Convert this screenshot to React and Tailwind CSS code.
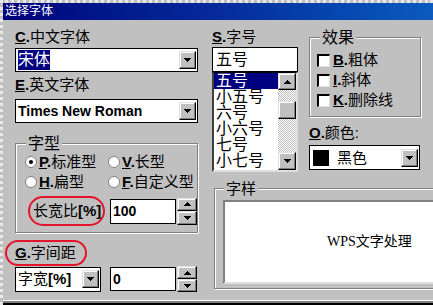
import React from 'react';

const raised =
  'flex shrink-0 items-center justify-center bg-[#c0c0c0] border border-t-[#dfdfdf] border-l-[#dfdfdf] border-r-black border-b-black shadow-[inset_-1px_-1px_0_#808080,inset_1px_1px_0_#fff]';

function Tri({ up }) {
  const rows = up ? [3, 2, 1, 0] : [0, 1, 2, 3];
  return (
    <svg width="7" height="4" viewBox="0 0 7 4" shapeRendering="crispEdges">
      {rows.map((r, i) => (
        <rect key={i} x={r} y={i} width={7 - r * 2} height="1" fill="#000" />
      ))}
    </svg>
  );
}

function DropBtn({ className = '' }) {
  return (
    <div className={`${raised} h-[18px] w-[17px] ${className}`}>
      <Tri />
    </div>
  );
}

function Spinner({ className = '' }) {
  return (
    <div className={`flex w-[20px] flex-col ${className}`}>
      <div className={`${raised} flex-1`}>
        <Tri up />
      </div>
      <div className={`${raised} flex-1`}>
        <Tri />
      </div>
    </div>
  );
}

function Label({ k, text, className = '' }) {
  return (
    <div className={`text-[15px] leading-[18px] ${className}`}>
      <span className="font-bold underline">{k}</span>
      <span className="font-bold">.</span>
      {text}
    </div>
  );
}

function Radio({ on, k, text }) {
  return (
    <div className="flex h-[18px] items-center gap-[2px]">
      <svg width="12" height="12" viewBox="0 0 12 12">
        <circle cx="6" cy="6" r="5.5" fill="#fff" stroke="#808080" />
        {on && <circle cx="6" cy="6" r="2" fill="#000" />}
      </svg>
      <span className="text-[15px] leading-[18px]">
        <span className="font-bold underline">{k}</span>
        <span className="font-bold">.</span>
        {text}
      </span>
    </div>
  );
}

function Check({ k, text }) {
  return (
    <div className="flex h-[18px] items-center gap-[3px]">
      <div className="h-[13px] w-[13px] border-t-2 border-l-2 border-r border-b border-t-black border-l-black border-r-[#dfdfdf] border-b-[#dfdfdf] bg-white" />
      <span className="text-[15px] leading-[18px]">
        <span className="font-bold underline">{k}</span>
        <span className="font-bold">.</span>
        {text}
      </span>
    </div>
  );
}

const group = 'border border-[#808080] shadow-[inset_1px_1px_0_#fff,1px_1px_0_#fff]';
const legend = '-mt-[9px] w-fit bg-[#c0c0c0] px-[2px] leading-[17px]';
const redRing = 'flex items-center rounded-[15px] border-2 border-[#e4142a]';

export default function App() {
  const sizes = ['五号', '小五号', '六号', '小六号', '七号', '小七号'];

  return (
    <div className="flex h-[305px] w-[433px] flex-col overflow-hidden border-l-[3px] border-t-[3px] border-dotted border-[#e8e8e8] bg-[#c0c0c0] font-['Liberation_Sans','Noto_Sans_CJK_SC',sans-serif] text-black">
      <div className="h-[17px] shrink-0 bg-gradient-to-r from-[#00007b] via-[#062a9c] to-[#0c5bbf] pl-[2px] text-[12px] leading-[17px] text-white">
        选择字体
      </div>

      <div className="flex flex-1">
        {/* left column */}
        <div className="ml-[12px] flex w-[189px] flex-col">
          <Label className="mt-[8px]" k="C" text="中文字体" />
          <div className="mt-[2px] flex h-[24px] items-center border border-black bg-white pl-[2px] pr-[1px]">
            <span className="bg-[#000080] text-[16px] leading-[20px] text-white">宋体</span>
            <DropBtn className="ml-auto" />
          </div>

          <Label className="mt-[4px]" k="E" text="英文字体" />
          <div className="mt-[5px] flex h-[24px] items-center border border-black bg-white pl-[2px] pr-[1px]">
            <span className="text-[14px] font-bold leading-[18px]">Times New Roman</span>
            <DropBtn className="ml-auto" />
          </div>

          <div className={`mt-[20px] pb-[6px] ${group}`}>
            <div className={`ml-[10px] text-[16px] ${legend}`}>字型</div>
            <div className="mt-[1px] grid grid-cols-[83px_1fr] gap-y-[2px] pl-[9px]">
              <Radio on k="P" text="标准型" />
              <Radio k="V" text="长型" />
              <Radio k="H" text="扁型" />
              <Radio k="F" text="自定义型" />
            </div>
            <div className="ml-[12px] mt-[5px] flex h-[30px] items-center">
              <div className={`${redRing} h-[30px] w-[77px] pl-[3px] text-[15px] leading-[18px]`}>
                长宽比<span className="font-bold">[%]</span>
              </div>
              <div className="ml-[5px] flex h-[25px] w-[66px] items-center border border-black bg-white pl-[2px] text-[14px] font-bold">
                100
              </div>
              <Spinner className="ml-[1px] h-[27px]" />
            </div>
          </div>

          <div className={`${redRing} -ml-[10px] mt-[7px] h-[26px] w-[82px] pl-[8px]`}>
            <Label k="G" text="字间距" />
          </div>

          <div className="flex items-center">
            <div className="flex h-[25px] w-[86px] items-center border border-black bg-white pl-[2px] pr-[1px] text-[15px] leading-[18px]">
              字宽<span className="font-bold">[%]</span>
              <DropBtn className="ml-auto" />
            </div>
            <div className="ml-[9px] flex h-[24px] w-[66px] items-center border border-black bg-white pl-[2px] text-[14px] font-bold">
              0
            </div>
            <Spinner className="ml-[1px] h-[26px]" />
          </div>
        </div>

        {/* right area */}
        <div className="ml-[14px] flex flex-col">
          <div className="flex">
            <div className="flex w-[86px] flex-col">
              <Label className="mt-[8px]" k="S" text="字号" />
              <div className="mt-[1px] flex h-[25px] items-center border border-black bg-white pl-[3px] text-[16px]">
                五号
              </div>
              <div className="flex h-[100px] border-t border-l-2 border-r-2 border-b-2 border-t-black border-l-[#404040] border-r-[#dfdfdf] border-b-[#dfdfdf] bg-white">
                <div className="flex w-[64px] flex-col">
                  {sizes.map((s, i) => (
                    <div
                      key={s}
                      className={`h-[16px] pl-[2px] text-[16px] leading-[16px] ${
                        i === 0 ? 'bg-[#000080] text-white' : ''
                      }`}
                    >
                      {s}
                    </div>
                  ))}
                </div>
                <div className="flex w-[18px] flex-col bg-[repeating-conic-gradient(#c0c0c0_0_25%,#fff_0_50%)] bg-[length:2px_2px]">
                  <div className={`${raised} h-[17px]`}>
                    <Tri up />
                  </div>
                  <div className={`${raised} mt-[11px] h-[18px]`} />
                  <div className="flex-1" />
                  <div className={`${raised} h-[18px]`}>
                    <Tri />
                  </div>
                </div>
              </div>
            </div>

            <div className="ml-[11px] flex w-[112px] flex-col">
              <div className={`mt-[17px] h-[80px] ${group}`}>
                <div className={`ml-[10px] text-[16px] ${legend}`}>效果</div>
                <div className="mt-[5px] flex flex-col gap-[2px] pl-[7px]">
                  <Check k="B" text="粗体" />
                  <Check k="I" text="斜体" />
                  <Check k="K" text="删除线" />
                </div>
              </div>
              <div className="mt-[7px] text-[15px] leading-[18px]">
                <span className="font-bold underline">O</span>
                <span className="font-bold">.</span>颜色:
              </div>
              <div className="mt-[3px] flex h-[25px] w-[111px] items-center border border-black bg-white pl-[3px] pr-[1px]">
                <div className="h-[16px] w-[16px] bg-black" />
                <span className="ml-[8px] text-[15px] leading-[18px]">黑色</span>
                <DropBtn className="ml-auto" />
              </div>
            </div>
          </div>

          <div className={`ml-[2px] mt-[16px] w-[240px] pb-[4px] ${group}`}>
            <div className={`ml-[9px] text-[15px] ${legend}`}>字样</div>
            <div className="ml-[8px] mt-[3px] h-[84px] border-2 border-t-[#808080] border-l-[#808080] border-r-[#dfdfdf] border-b-[#dfdfdf] bg-white pl-[102px] pt-[32px] font-['Liberation_Serif','Noto_Sans_CJK_SC',serif] text-[14px] leading-[16px]">
              WPS文字处理
            </div>
          </div>
        </div>
      </div>

      <div className="h-[5px] shrink-0 border-t border-white bg-[#808080] border-b-2 border-b-black" />
    </div>
  );
}
